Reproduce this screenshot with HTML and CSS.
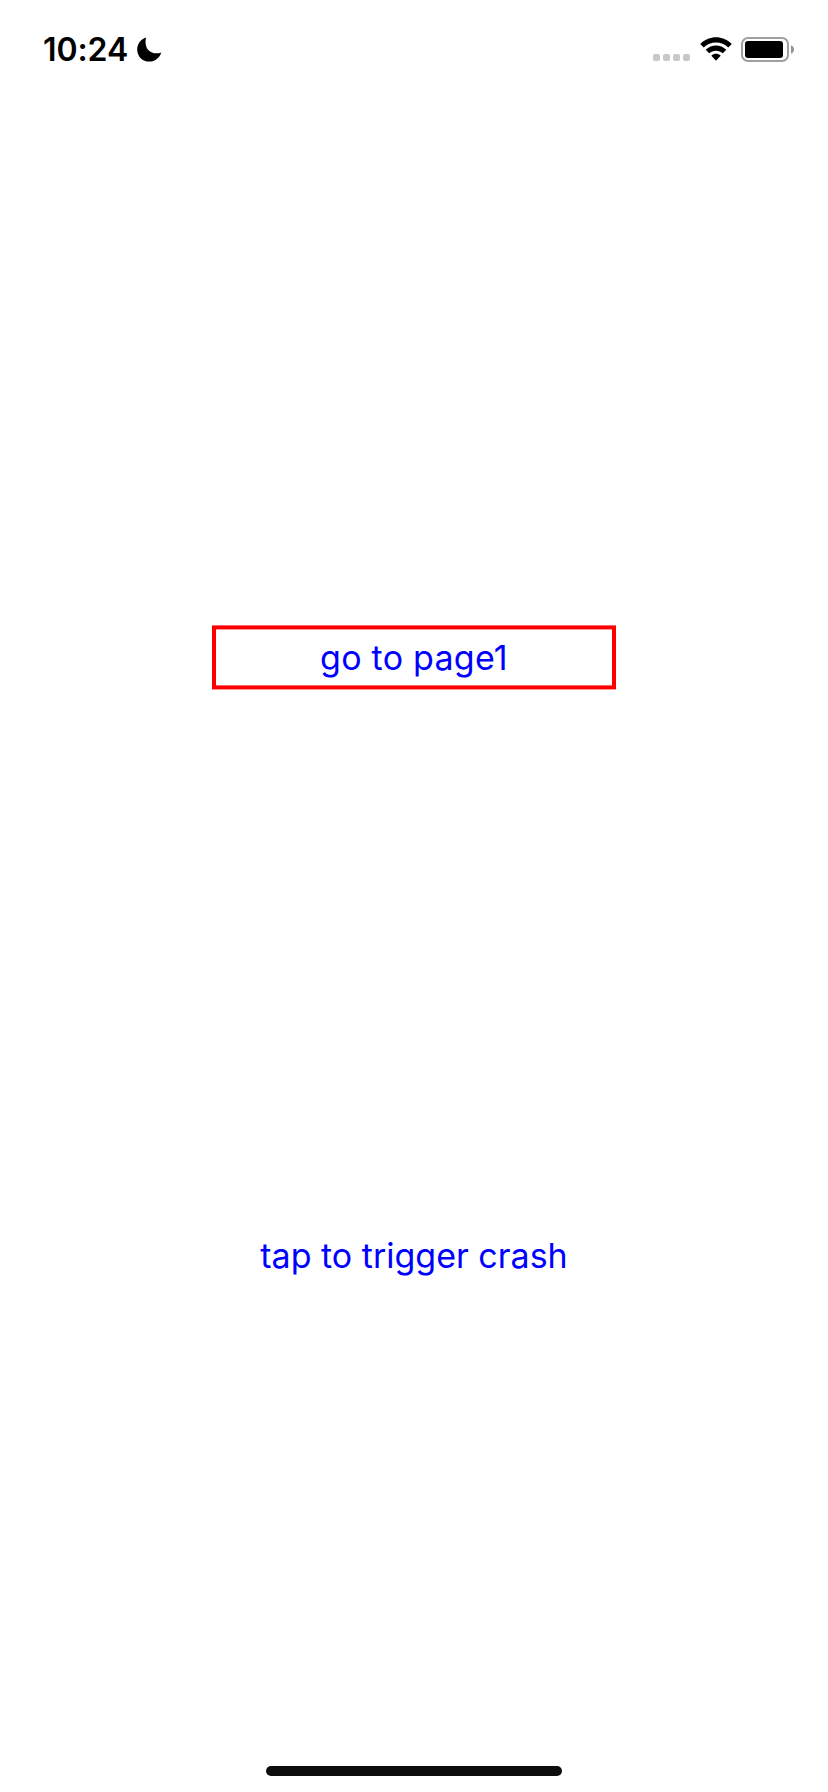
FILE: index.html
```html
<!DOCTYPE html>
<html lang="en">
<head>
<meta charset="utf-8">
<title>Home</title>
<link rel="stylesheet" href="styles.css">
</head>
<body>
<div class="screen">
  <header class="status-bar">
    <div class="clock">
      <span class="time">10:24</span>
      <svg class="moon" width="25" height="25" viewBox="0 0 25 25"><path d="M9.200 .5C8.700 2 8.500 3.500 8.500 5.200C8.500 11.800 13 16.300 19.500 16.300C21.200 16.300 22.700 16 24.300 15.400C22.500 20.800 18 24.600 12.500 24.600C5.500 24.600 .2 19.300 .2 12.400C.2 7 3.800 2.200 9.200 .5Z"/></svg>
    </div>
    <div class="indicators">
      <div class="signal"><i></i><i></i><i></i><i></i></div>
      <svg class="wifi" width="32" height="24" viewBox="0 0 32 24">
        <path d="M.2 7C9 -2.100 23 -2.100 31.800 7L28.300 10.500C21.500 3.800 10.500 3.800 3.700 10.500Z"/>
        <path d="M5.700 12.800C11.500 7 20.500 7 26.300 12.800L22.800 16.200C19 12.800 13 12.800 9.200 16.200Z"/>
        <path d="M11.300 18.800C14.100 16.200 17.900 16.200 20.700 18.800L16 23.700Z"/>
      </svg>
      <svg class="battery" width="53" height="25" viewBox="0 0 53 25">
        <rect x="1" y="1" width="46" height="23" rx="6" fill="none" stroke="#a0a0a0" stroke-width="2"/>
        <rect x="4" y="4" width="38" height="17" rx="3"/>
        <path d="M50 8.300Q53 9.500 53 12.500T50 16.700Z" fill="#929292"/>
      </svg>
    </div>
  </header>
  <main class="actions">
    <button class="action page-link"><span>go to page1</span></button>
    <button class="action crash-link"><span>tap to trigger crash</span></button>
  </main>
  <div class="home-indicator"></div>
</div>
</body>
</html>
```
FILE: styles.css
```css
body {
  margin: 0;
  background: #fff;
  font-family: Inter, "Liberation Sans", sans-serif;
}
.screen {
  display: flex;
  flex-direction: column;
  align-items: center;
  box-sizing: border-box;
  width: 828px;
  height: 1792px;
  padding-bottom: 16px;
}
.status-bar {
  display: flex;
  justify-content: space-between;
  box-sizing: border-box;
  width: 100%;
  height: 88px;
  padding: 37px 34px 0 43px;
}
.clock,
.indicators {
  display: flex;
  align-items: flex-start;
  height: 25px;
}
.time {
  width: 94px;
  font-size: 32px;
  font-weight: 600;
  line-height: 26px;
  letter-spacing: -0.1px;
  white-space: nowrap;
}
.signal {
  display: flex;
  gap: 3px;
  margin: 17px 9.5px 0 0;
}
.signal i {
  width: 7px;
  height: 7px;
  border-radius: 2px;
  background: #c8c8c8;
}
.wifi {
  margin-right: 9.5px;
}
.actions {
  display: flex;
  flex: 1;
  flex-direction: column;
  align-items: center;
  padding-top: 537px;
}
.action {
  box-sizing: border-box;
  width: 404px;
  height: 64px;
  padding: 2px 0 0;
  border: 0;
  background: none;
  color: #00f;
  font: 400 34px/40px Inter, "Liberation Sans", sans-serif;
  white-space: nowrap;
}
.page-link {
  border: 4px solid #f00;
  letter-spacing: 0.25px;
  transform: translateY(0.4px);
}
.crash-link {
  margin-top: 534px;
}
.home-indicator {
  width: 296px;
  height: 10px;
  border-radius: 5px;
  background: #0d0d0d;
}
```
